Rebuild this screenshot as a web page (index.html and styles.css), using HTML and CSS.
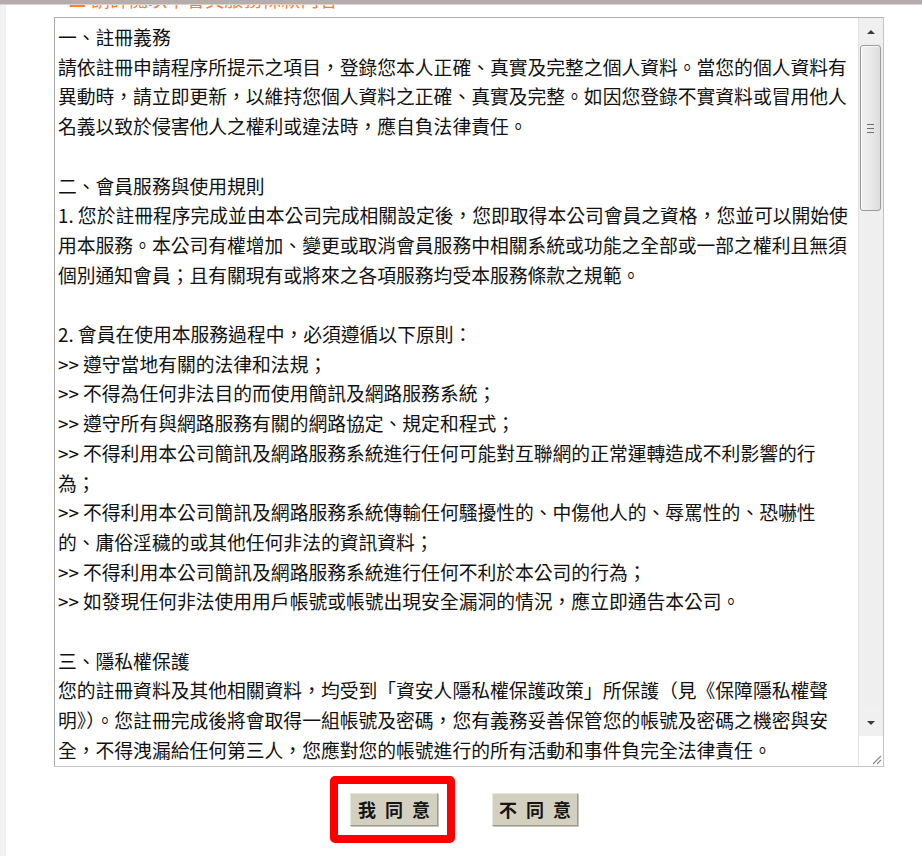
FILE: index.html
```html
<!DOCTYPE html>
<html lang="zh-Hant">
<head>
<meta charset="utf-8">
<title>會員條款</title>
<link rel="stylesheet" href="styles.css">
</head>
<body>
<div class="topbar"></div>
<div class="page">
  <div class="title-clip"><div class="title">■ 請詳閱以下會員服務條款內容</div></div>
  <div class="terms">
    <div class="terms-text">
      <div class="ln">一、註冊義務</div>
      <div class="ln">請依註冊申請程序所提示之項目，登錄您本人正確、真實及完整之個人資料。當您的個人資料有</div>
      <div class="ln">異動時，請立即更新，以維持您個人資料之正確、真實及完整。如因您登錄不實資料或冒用他人</div>
      <div class="ln">名義以致於侵害他人之權利或違法時，應自負法律責任。</div>
      <div class="ln">&nbsp;</div>
      <div class="ln">二、會員服務與使用規則</div>
      <div class="ln">1. 您於註冊程序完成並由本公司完成相關設定後，您即取得本公司會員之資格，您並可以開始使</div>
      <div class="ln">用本服務。本公司有權增加、變更或取消會員服務中相關系統或功能之全部或一部之權利且無須</div>
      <div class="ln">個別通知會員；且有關現有或將來之各項服務均受本服務條款之規範。</div>
      <div class="ln">&nbsp;</div>
      <div class="ln">2. 會員在使用本服務過程中，必須遵循以下原則：</div>
      <div class="ln">&gt;&gt; 遵守當地有關的法律和法規；</div>
      <div class="ln">&gt;&gt; 不得為任何非法目的而使用簡訊及網路服務系統；</div>
      <div class="ln">&gt;&gt; 遵守所有與網路服務有關的網路協定、規定和程式；</div>
      <div class="ln">&gt;&gt; 不得利用本公司簡訊及網路服務系統進行任何可能對互聯網的正常運轉造成不利影響的行</div>
      <div class="ln">為；</div>
      <div class="ln">&gt;&gt; 不得利用本公司簡訊及網路服務系統傳輸任何騷擾性的、中傷他人的、辱罵性的、恐嚇性</div>
      <div class="ln">的、庸俗淫穢的或其他任何非法的資訊資料；</div>
      <div class="ln">&gt;&gt; 不得利用本公司簡訊及網路服務系統進行任何不利於本公司的行為；</div>
      <div class="ln">&gt;&gt; 如發現任何非法使用用戶帳號或帳號出現安全漏洞的情況，應立即通告本公司。</div>
      <div class="ln">&nbsp;</div>
      <div class="ln">三、隱私權保護</div>
      <div class="ln">您的註冊資料及其他相關資料，均受到「資安人隱私權保護政策」所保護（見《保障隱私權聲</div>
      <div class="ln">明》）。您註冊完成後將會取得一組帳號及密碼，您有義務妥善保管您的帳號及密碼之機密與安</div>
      <div class="ln">全，不得洩漏給任何第三人，您應對您的帳號進行的所有活動和事件負完全法律責任。</div>
    </div>
    <div class="scrollbar">
      <div class="sb-btn"><span class="arrow-up"></span></div>
      <div class="sb-thumb"><span class="grip"></span></div>
      <div class="sb-track"></div>
      <div class="sb-btn sb-btn-down"><span class="arrow-down"></span></div>
      <div class="sb-corner">
        <svg width="12" height="12" viewBox="0 0 12 12"><path d="M11 3 L3 11 M11 7 L7 11" stroke="#8a8a8a" stroke-width="1.2" fill="none"/></svg>
      </div>
    </div>
  </div>
  <div class="actions">
    <span class="highlight"><button class="btn" type="button">我 同 意</button></span>
    <button class="btn btn-second" type="button">不 同 意</button>
  </div>
</div>
</body>
</html>
```

FILE: styles.css
```css
html, body {
  margin: 0;
  padding: 0;
  background: #ffffff;
  font-family: "Noto Sans CJK TC", "Noto Sans", sans-serif;
  color: #111111;
}

.topbar {
  height: 4px;
  background: #b5acac;
  border-bottom: 1px solid #d8d2d2;
}

.page {
  border-left: 6px solid #f1f1f1;
  padding-left: 48px;
  height: 851px;
  box-sizing: border-box;
}

.title-clip {
  height: 6px;
  overflow: hidden;
  padding-left: 14px;
}

.title {
  margin-top: -17px;
  font-size: 19px;
  line-height: 22px;
  color: #ff7f2e;
  white-space: nowrap;
}

.terms {
  margin-top: 6px;
  width: 830px;
  height: 750px;
  box-sizing: border-box;
  border: 1px solid #a9a9a9;
  border-color: #b0b0b0 #c4c4c4 #c4c4c4 #a9a9a9;
  display: flex;
  background: #ffffff;
}

.terms-text {
  flex: 1;
  overflow: hidden;
  padding: 4px 0 0 3px;
  font-size: 18.8px;
  line-height: 29.7px;
}

.ln {
  white-space: nowrap;
}

.scrollbar {
  width: 25px;
  border-left: 1px solid #e2e2e2;
  background: #ededed;
  display: flex;
  flex-direction: column;
  box-sizing: border-box;
}

.sb-btn {
  height: 25px;
  display: flex;
  align-items: center;
  justify-content: center;
  background: #f0f0f0;
}

.sb-btn-down {
  height: 29px;
  padding-top: 3px;
  box-sizing: border-box;
}

.arrow-up {
  width: 0;
  height: 0;
  border-left: 4px solid transparent;
  border-right: 4px solid transparent;
  border-bottom: 4px solid #3a3a3a;
  margin-top: 2px;
}

.arrow-down {
  width: 0;
  height: 0;
  border-left: 4px solid transparent;
  border-right: 4px solid transparent;
  border-top: 4px solid #3a3a3a;
}

.sb-thumb {
  margin: 2px 2px 0 1px;
  height: 164px;
  border: 1px solid #9b9b9b;
  border-radius: 3px;
  background: linear-gradient(to right, #f2f2f2 0%, #ebebeb 45%, #dcdcdc 100%);
  box-shadow: inset 1px 1px 0 #fbfbfb;
  display: flex;
  align-items: center;
  justify-content: center;
}

.grip {
  width: 7px;
  height: 7px;
  border-top: 1px solid #6f6f6f;
  border-bottom: 1px solid #6f6f6f;
}

.grip::after {
  content: "";
  display: block;
  margin-top: 3px;
  height: 1px;
  background: #6f6f6f;
}

.sb-track {
  flex: 1;
  background: #efefef;
}

.sb-corner {
  height: 29px;
  background: #ffffff;
  display: flex;
  align-items: flex-end;
  justify-content: flex-end;
  padding: 0 1px 1px 0;
}

.sb-corner svg {
  display: block;
}

.actions {
  margin-top: 9px;
  padding-left: 276px;
  display: flex;
  align-items: center;
}

.highlight {
  display: inline-block;
  border: 8px solid #ff0000;
  border-radius: 5px;
  padding: 9px 9px 9px 12px;
}

.btn {
  display: block;
  width: 88px;
  height: 33px;
  margin: 0;
  padding: 0;
  font-family: "Noto Sans CJK TC", "Noto Sans", sans-serif;
  font-size: 18px;
  font-weight: bold;
  word-spacing: 5px;
  color: #151515;
  background: #d3d0bf;
  border: 1px solid;
  border-color: #e9e7dc #9d9b8e #9d9b8e #e9e7dc;
  box-shadow: 1px 1px 0 #c7c5bb;
  line-height: 31px;
  cursor: pointer;
}

.btn-second {
  margin-left: 37px;
  width: 86px;
}
```
